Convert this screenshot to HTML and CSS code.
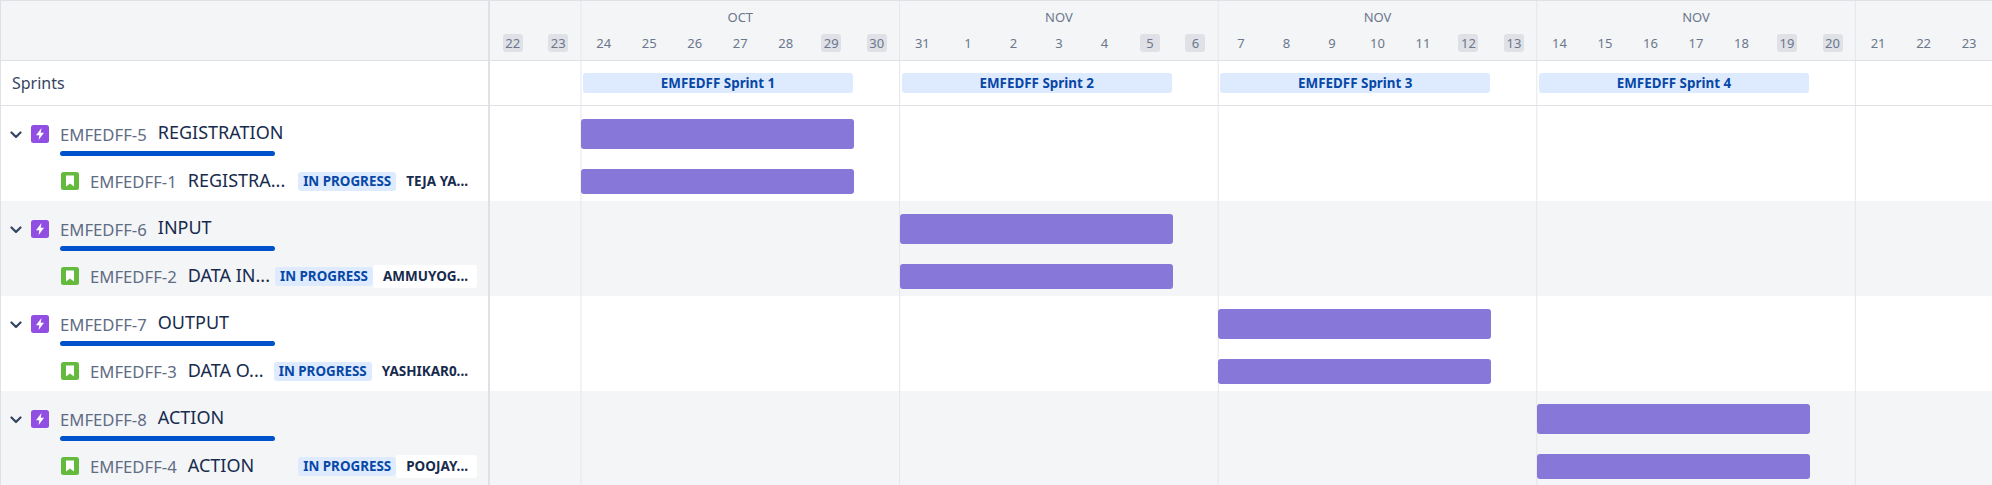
FILE: index.html
```html
<!DOCTYPE html>
<html lang="en">
<head>
  <meta charset="UTF-8">
  <title>Roadmap</title>
  <link rel="stylesheet" href="styles.css">
</head>
<body>
  <svg class="defs" width="0" height="0">
    <symbol id="epic" viewBox="0 0 18 18">
      <rect width="18" height="18" rx="2.5" fill="#904ee2"/>
      <path d="M10.5 3 5 10.2H8.3L7.6 15 13 7.8H9.7Z" fill="#fff"/>
    </symbol>
    <symbol id="story" viewBox="0 0 18 18">
      <rect width="18" height="18" rx="2.5" fill="#63ba3c"/>
      <path d="M5 3.5H13V14.5L9 11.5 5 14.5Z" fill="#fff"/>
    </symbol>
    <symbol id="chevron" viewBox="0 0 12 8">
      <path d="M1.5 1.5 6 6 10.5 1.5" fill="none" stroke="#344563" stroke-width="2.2" stroke-linecap="round" stroke-linejoin="round"/>
    </symbol>
  </svg>

  <div class="roadmap">
    <div class="row header-row">
      <div class="side"></div>
      <div class="track header-track">
        <div class="month month-start">
          <div class="month-name"></div>
          <div class="days">
            <span class="day"><b class="weekend">22</b></span>
            <span class="day"><b class="weekend">23</b></span>
          </div>
        </div>
        <div class="month">
          <div class="month-name">OCT</div>
          <div class="days">
            <span class="day"><b>24</b></span>
            <span class="day"><b>25</b></span>
            <span class="day"><b>26</b></span>
            <span class="day"><b>27</b></span>
            <span class="day"><b>28</b></span>
            <span class="day"><b class="weekend">29</b></span>
            <span class="day"><b class="weekend">30</b></span>
          </div>
        </div>
        <div class="month">
          <div class="month-name">NOV</div>
          <div class="days">
            <span class="day"><b>31</b></span>
            <span class="day"><b>1</b></span>
            <span class="day"><b>2</b></span>
            <span class="day"><b>3</b></span>
            <span class="day"><b>4</b></span>
            <span class="day"><b class="weekend">5</b></span>
            <span class="day"><b class="weekend">6</b></span>
          </div>
        </div>
        <div class="month">
          <div class="month-name">NOV</div>
          <div class="days">
            <span class="day"><b>7</b></span>
            <span class="day"><b>8</b></span>
            <span class="day"><b>9</b></span>
            <span class="day"><b>10</b></span>
            <span class="day"><b>11</b></span>
            <span class="day"><b class="weekend">12</b></span>
            <span class="day"><b class="weekend">13</b></span>
          </div>
        </div>
        <div class="month">
          <div class="month-name">NOV</div>
          <div class="days">
            <span class="day"><b>14</b></span>
            <span class="day"><b>15</b></span>
            <span class="day"><b>16</b></span>
            <span class="day"><b>17</b></span>
            <span class="day"><b>18</b></span>
            <span class="day"><b class="weekend">19</b></span>
            <span class="day"><b class="weekend">20</b></span>
          </div>
        </div>
        <div class="month month-end">
          <div class="month-name"></div>
          <div class="days">
            <span class="day"><b>21</b></span>
            <span class="day"><b>22</b></span>
            <span class="day"><b>23</b></span>
          </div>
        </div>
      </div>
    </div>

    <div class="row sprint-row">
      <div class="side sprint-label">Sprints</div>
      <div class="track sprint-track">
        <div class="sprint sprint-1">EMFEDFF Sprint 1</div>
        <div class="sprint sprint-2">EMFEDFF Sprint 2</div>
        <div class="sprint sprint-3">EMFEDFF Sprint 3</div>
        <div class="sprint sprint-4">EMFEDFF Sprint 4</div>
      </div>
    </div>

    <div class="group">
      <div class="row epic-row">
        <div class="side epic-side">
          <svg class="chevron"><use href="#chevron"/></svg>
          <svg class="icon"><use href="#epic"/></svg>
          <div class="epic-body">
            <div class="epic-line"><span class="key">EMFEDFF-5</span><span class="summary">REGISTRATION</span></div>
            <div class="progress"></div>
          </div>
        </div>
        <div class="track"><div class="bar bar-epic sprint-1"></div></div>
      </div>
      <div class="row story-row">
        <div class="side story-side">
          <svg class="icon"><use href="#story"/></svg>
          <span class="key">EMFEDFF-1</span><span class="summary">REGISTRA...</span>
          <span class="status">IN PROGRESS</span><span class="assignee">TEJA YA...</span>
        </div>
        <div class="track"><div class="bar bar-story sprint-1"></div></div>
      </div>
    </div>

    <div class="group alt">
      <div class="row epic-row">
        <div class="side epic-side">
          <svg class="chevron"><use href="#chevron"/></svg>
          <svg class="icon"><use href="#epic"/></svg>
          <div class="epic-body">
            <div class="epic-line"><span class="key">EMFEDFF-6</span><span class="summary">INPUT</span></div>
            <div class="progress"></div>
          </div>
        </div>
        <div class="track"><div class="bar bar-epic sprint-2"></div></div>
      </div>
      <div class="row story-row">
        <div class="side story-side">
          <svg class="icon"><use href="#story"/></svg>
          <span class="key">EMFEDFF-2</span><span class="summary">DATA IN...</span>
          <span class="status">IN PROGRESS</span><span class="assignee">AMMUYOG...</span>
        </div>
        <div class="track"><div class="bar bar-story sprint-2"></div></div>
      </div>
    </div>

    <div class="group">
      <div class="row epic-row">
        <div class="side epic-side">
          <svg class="chevron"><use href="#chevron"/></svg>
          <svg class="icon"><use href="#epic"/></svg>
          <div class="epic-body">
            <div class="epic-line"><span class="key">EMFEDFF-7</span><span class="summary">OUTPUT</span></div>
            <div class="progress"></div>
          </div>
        </div>
        <div class="track"><div class="bar bar-epic sprint-3"></div></div>
      </div>
      <div class="row story-row">
        <div class="side story-side">
          <svg class="icon"><use href="#story"/></svg>
          <span class="key">EMFEDFF-3</span><span class="summary">DATA O...</span>
          <span class="status">IN PROGRESS</span><span class="assignee">YASHIKAR0...</span>
        </div>
        <div class="track"><div class="bar bar-story sprint-3"></div></div>
      </div>
    </div>

    <div class="group alt">
      <div class="row epic-row">
        <div class="side epic-side">
          <svg class="chevron"><use href="#chevron"/></svg>
          <svg class="icon"><use href="#epic"/></svg>
          <div class="epic-body">
            <div class="epic-line"><span class="key">EMFEDFF-8</span><span class="summary">ACTION</span></div>
            <div class="progress"></div>
          </div>
        </div>
        <div class="track"><div class="bar bar-epic sprint-4"></div></div>
      </div>
      <div class="row story-row">
        <div class="side story-side">
          <svg class="icon"><use href="#story"/></svg>
          <span class="key">EMFEDFF-4</span><span class="summary">ACTION</span>
          <span class="status">IN PROGRESS</span><span class="assignee">POOJAY...</span>
        </div>
        <div class="track"><div class="bar bar-story sprint-4"></div></div>
      </div>
    </div>
  </div>
</body>
</html>
```

FILE: styles.css
```css
html, body {
  margin: 0;
  height: 100%;
  overflow: hidden;
}

body {
  font-family: "Noto Sans", "Open Sans", sans-serif;
  font-size: 14px;
  color: #172b4d;
  background: #fff;
}

.defs {
  display: block;
  height: 0;
}

.roadmap {
  width: 1992px;
  border-left: 1px solid #dfe1e6;
  box-sizing: border-box;
}

.row {
  display: flex;
}

.side {
  flex: none;
  width: 489px;
  box-sizing: border-box;
  border-right: 2px solid #dfe1e6;
}

.track {
  flex: 1;
  min-width: 0;
  display: grid;
  grid-template-columns: repeat(33, 1fr);
  align-items: start;
  background-image: repeating-linear-gradient(90deg, #e4e6ea 0, #e4e6ea 1px, transparent 1px, transparent 318.6px);
  background-size: 318.6px 100%;
  background-position: 90.5px 0;
}

/* header */
.header-row {
  height: 61px;
  box-sizing: border-box;
  background-color: #f4f5f7;
  border-top: 1px solid #dfe1e6;
  border-bottom: 1px solid #dfe1e6;
}

.header-track {
  display: flex;
}

.month {
  flex: none;
  width: 318.6px;
  color: #6b778c;
  font-size: 13px;
}

.month-start {
  width: 91px;
}

.month-end {
  width: 136.6px;
}

.month-name {
  height: 16px;
  margin-top: 8px;
  line-height: 16px;
  text-align: center;
}

.days {
  display: flex;
  margin-top: 9px;
}

.day {
  flex: none;
  width: 45.5px;
  display: flex;
  justify-content: center;
}

.day b {
  font-weight: 400;
  min-width: 20px;
  height: 18px;
  line-height: 18px;
  text-align: center;
  border-radius: 3px;
}

.day .weekend {
  background: #dfe1e6;
}

/* sprints */
.sprint-row {
  height: 45px;
  box-sizing: border-box;
  border-bottom: 1px solid #dfe1e6;
}

.sprint-label {
  padding: 0 0 0 11px;
  line-height: 44px;
  font-size: 16px;
  color: #344563;
}

.sprint {
  height: 20px;
  margin: 12px 1px 0 2px;
  line-height: 20px;
  text-align: center;
  font-size: 13.4px;
  font-weight: 700;
  color: #0747a6;
  background: #deebff;
  border-radius: 3px;
}

.sprint-1 { grid-column: 3 / span 6; }
.sprint-2 { grid-column: 10 / span 6; }
.sprint-3 { grid-column: 17 / span 6; }
.sprint-4 { grid-column: 24 / span 6; }

.sprint-track .sprint {
  grid-row: 1;
}

/* issue rows */
.group {
  height: 95px;
}

.group.alt {
  background: #f4f5f7;
}

.epic-row {
  height: 55px;
}

.story-row {
  height: 40px;
}

.track .bar {
  grid-row: 1;
  background: #8777d9;
  border-radius: 3px;
}

.bar-epic {
  height: 30px;
  margin-top: 13px;
}

.bar-story {
  height: 25px;
  margin-top: 8px;
}

.epic-side {
  display: flex;
  align-items: flex-start;
  padding: 19px 0 0 9px;
}

.chevron {
  flex: none;
  width: 12px;
  height: 8px;
  margin-top: 6px;
}

.icon {
  flex: none;
  width: 18px;
  height: 18px;
}

.epic-side .icon {
  margin-left: 9px;
}

.epic-body {
  margin-left: 11px;
  width: 215px;
}

.epic-line {
  display: flex;
  height: 26px;
  margin-top: -5px;
  line-height: 24px;
}

.key {
  flex: none;
  color: #5e6c84;
  font-size: 16.7px;
  padding-top: 3px;
}

.summary {
  flex: none;
  margin-left: 11px;
  font-size: 18px;
  white-space: nowrap;
}

.progress {
  height: 5px;
  margin-top: 5px;
  background: #0052cc;
  border-radius: 3px;
}

.story-side {
  display: flex;
  align-items: center;
  padding: 0 11px 0 60px;
  line-height: 24px;
}

.story-side .key {
  margin-left: 11px;
  padding-top: 2px;
}

.story-side .summary {
  margin-bottom: 2px;
}

.status {
  flex: none;
  margin-left: auto;
  height: 19px;
  padding: 0 5px;
  line-height: 19px;
  font-size: 13.4px;
  font-weight: 700;
  color: #0747a6;
  background: #deebff;
  border-radius: 3px;
}

.assignee {
  flex: none;
  height: 23px;
  padding: 0 9px 0 10px;
  line-height: 23px;
  font-size: 13.5px;
  font-weight: 700;
  color: #172b4d;
  background: #fff;
  border-radius: 3px;
}
```
